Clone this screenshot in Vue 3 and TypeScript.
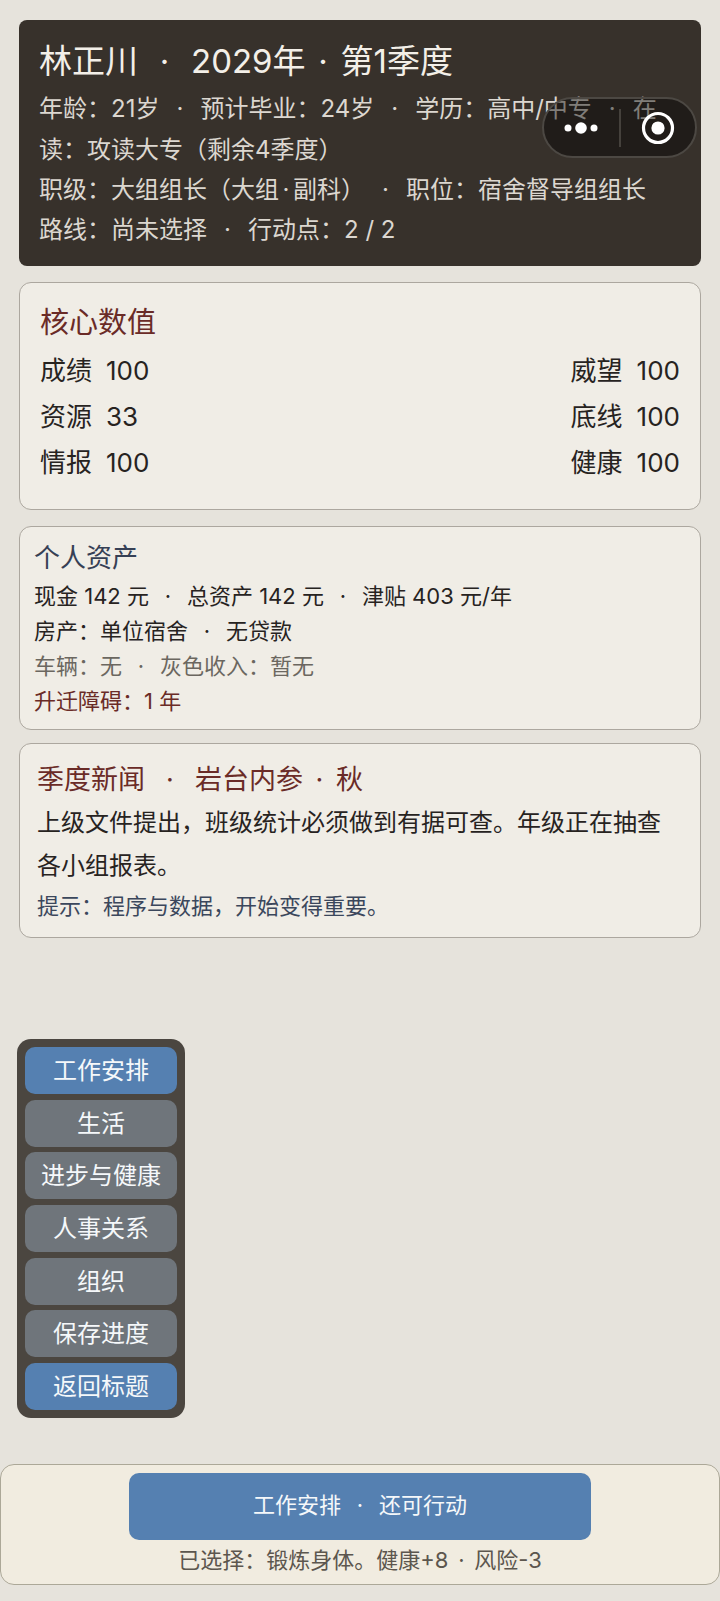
<script setup lang="ts">
import { ref } from 'vue'

interface Stat {
  label: string
  value: number
}

const stats: Stat[] = [
  { label: '成绩', value: 100 },
  { label: '威望', value: 100 },
  { label: '资源', value: 33 },
  { label: '底线', value: 100 },
  { label: '情报', value: 100 },
  { label: '健康', value: 100 },
]

interface MenuItem {
  label: string
  primary?: boolean
}

const menu: MenuItem[] = [
  { label: '工作安排', primary: true },
  { label: '生活' },
  { label: '进步与健康' },
  { label: '人事关系' },
  { label: '组织' },
  { label: '保存进度' },
  { label: '返回标题', primary: true },
]

const current = ref('工作安排')
</script>

<template>
  <div class="page">
    <header class="profile">
      <h1>林正川<span class="sep">·</span>2029年<span class="sep tight">·</span>第1季度</h1>
      <p class="bio">年龄：21岁<span class="sep">·</span>预计毕业：24岁<span class="sep">·</span>学历：高中/中专<span class="sep">·</span>在读：攻读大专（剩余4季度）</p>
      <p>职级：大组组长（大组<span class="sep mini">·</span>副科）<span class="sep">·</span>职位：宿舍督导组组长</p>
      <p>路线：尚未选择<span class="sep">·</span>行动点：2 / 2</p>
    </header>

    <section class="card core">
      <h2>核心数值</h2>
      <dl class="stats">
        <div v-for="s in stats" :key="s.label" class="stat">
          <dt>{{ s.label }}</dt>
          <dd>{{ s.value }}</dd>
        </div>
      </dl>
    </section>

    <section class="card assets">
      <h2>个人资产</h2>
      <p>现金 142 元<span class="sep">·</span>总资产 142 元<span class="sep">·</span>津贴 403 元/年</p>
      <p>房产：单位宿舍<span class="sep">·</span>无贷款</p>
      <p class="muted">车辆：无<span class="sep">·</span>灰色收入：暂无</p>
      <p class="warn">升迁障碍：1 年</p>
    </section>

    <section class="card news">
      <h2>季度新闻<span class="sep">·</span>岩台内参<span class="sep tight">·</span>秋</h2>
      <p>上级文件提出，班级统计必须做到有据可查。年级正在抽查各小组报表。</p>
      <p class="tip">提示：程序与数据，开始变得重要。</p>
    </section>

    <nav class="menu">
      <button
        v-for="m in menu"
        :key="m.label"
        type="button"
        :class="{ primary: m.primary }"
        @click="current = m.label"
      >{{ m.label }}</button>
    </nav>

    <footer class="action">
      <button type="button" class="go">{{ current }}<span class="sep">·</span>还可行动</button>
      <p>已选择：锻炼身体。健康+8<span class="sep tight">·</span>风险-3</p>
    </footer>

    <div class="capsule">
      <button type="button" aria-label="更多">
        <svg width="36" height="14" viewBox="0 0 36 14" fill="#fff">
          <circle cx="5" cy="7" r="3.5" />
          <circle cx="18" cy="7" r="5.8" />
          <circle cx="31" cy="7" r="3.5" />
        </svg>
      </button>
      <i class="bar"></i>
      <button type="button" aria-label="关闭">
        <svg width="34" height="34" viewBox="0 0 34 34">
          <circle cx="17" cy="17" r="14.5" fill="none" stroke="#fff" stroke-width="3.2" />
          <circle cx="17" cy="17" r="6.6" fill="#fff" />
        </svg>
      </button>
    </div>
  </div>
</template>

<style>
body {
  background: #e6e3dc;
}
</style>

<style scoped>
.page {
  position: relative;
  box-sizing: border-box;
  min-height: 100vh;
  padding: 20px 0 16px;
  display: flex;
  flex-direction: column;
  font-family: Inter, "Noto Sans CJK SC", sans-serif;
  color: #27231f;
}

h1,
h2,
p,
dl,
dd {
  margin: 0;
  font-weight: 400;
}

button {
  border: 0;
  padding: 0;
  font: inherit;
  color: #f5f8fa;
  cursor: pointer;
}

.sep {
  display: inline-block;
  width: 38px;
  text-align: center;
}

.profile {
  margin: 0 19px 16px;
  padding: 18px 20px 16px;
  border-radius: 8px;
  background: #37312b;
  color: #dcd7d0;
  font-size: 24px;
  line-height: 40px;
}

.profile h1 {
  margin-bottom: 4px;
  font-size: 33px;
  line-height: 46px;
  color: #f3efe8;
}

.profile .bio {
  line-height: 41px;
}

.profile .sep {
  width: 41px;
}

.profile .mini {
  width: 14px;
}

.profile h1 .sep {
  width: 53px;
}

.profile h1 .tight {
  width: 35px;
}

.card {
  margin: 0 19px;
  border: 1px solid #aca79f;
  border-radius: 12px;
  background: #f0ede6;
}

.core {
  margin-bottom: 16px;
  padding: 17px 20px 23px;
}

.core h2 {
  margin-bottom: 2px;
  font-size: 29px;
  line-height: 46px;
  color: #6a2b27;
}

.stats {
  display: grid;
  grid-template-columns: auto auto;
  justify-content: space-between;
  font-size: 26px;
  line-height: 46px;
}

.stat {
  display: flex;
  gap: 14px;
}

.assets {
  margin-bottom: 13px;
  padding: 12px 14px 10px;
  font-size: 22px;
  line-height: 35px;
}

.assets h2 {
  margin-bottom: 2px;
  font-size: 26px;
  line-height: 38px;
  color: #364055;
}

.assets .muted {
  color: #6b6760;
}

.assets .warn {
  color: #6a2b27;
}

.news {
  padding: 14px 20px 12px 17px;
  font-size: 24px;
  line-height: 43px;
}

.news h2 {
  font-size: 27px;
  line-height: 43px;
  color: #6a2b27;
}

.news .sep {
  width: 50px;
}

.news .tight {
  width: 33px;
}

.news .tip {
  font-size: 22px;
  line-height: 38px;
  color: #3b475c;
}

.menu {
  box-sizing: border-box;
  width: 168px;
  min-height: 379px;
  margin: auto 0 46px 17px;
  padding: 8px;
  border-radius: 14px;
  background: #4b4640;
  display: flex;
  flex-direction: column;
  justify-content: space-between;
}

.menu button {
  height: 47px;
  padding-bottom: 4px;
  border-radius: 10px;
  background: #6f757b;
  font-size: 24px;
}

.menu .primary {
  background: #5580b1;
}

.action {
  padding: 8px 0 3px;
  border: 1px solid #aca898;
  border-radius: 14px;
  background: #f1ece0;
  text-align: center;
  font-size: 22px;
  line-height: 41px;
  color: #5c564e;
}

.action .go {
  width: calc(100% - 256px);
  height: 67px;
  padding-bottom: 2px;
  border-radius: 10px;
  background: #5580b1;
  display: block;
  margin: 0 auto;
}

.action .tight {
  width: 26px;
}

.capsule {
  position: absolute;
  top: 97px;
  right: 23px;
  box-sizing: border-box;
  width: 155px;
  height: 61px;
  border: 2px solid #4c4843;
  border-radius: 31px;
  background: rgba(0, 0, 0, 0.42);
  display: flex;
  align-items: center;
}

.capsule button {
  flex: 1;
  height: 100%;
  background: transparent;
  display: flex;
  align-items: center;
  justify-content: center;
}

.capsule .bar {
  width: 2px;
  height: 38px;
  background: #45413c;
}
</style>
